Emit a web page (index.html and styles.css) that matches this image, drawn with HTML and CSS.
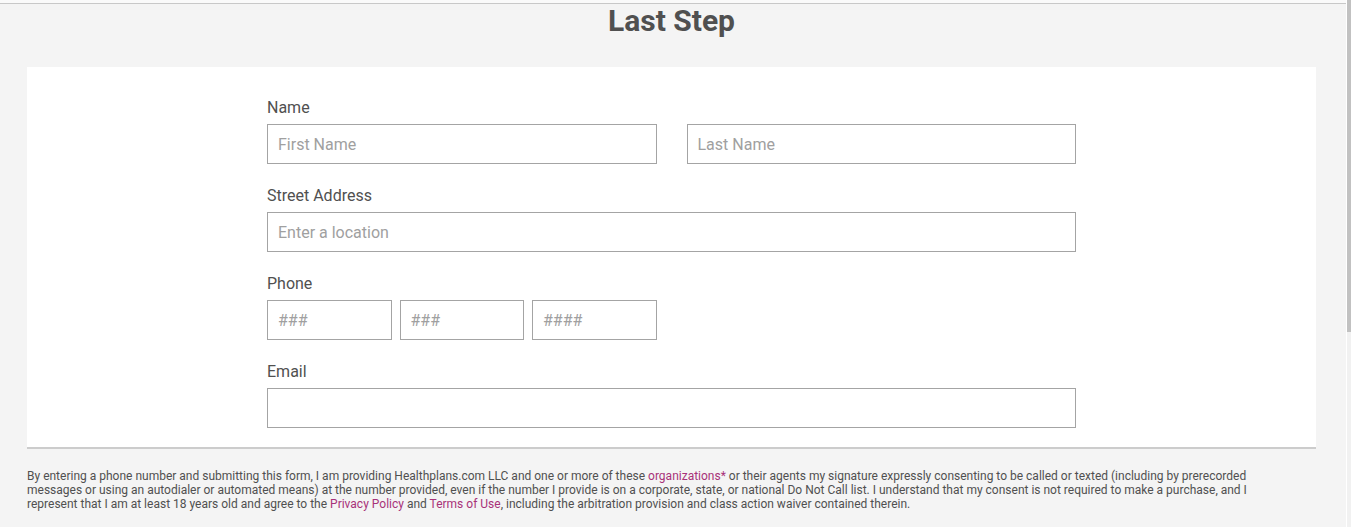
FILE: index.html
```html
<!DOCTYPE html>
<html lang="en">
<head>
<meta charset="utf-8">
<meta name="viewport" content="width=device-width, initial-scale=1">
<title>Last Step</title>
<link rel="stylesheet" href="styles.css">
</head>
<body>
<div class="viewport">
  <main class="page">
    <h1 class="title">Last Step</h1>
    <form class="card">
      <div class="fields">
        <fieldset class="group">
          <legend class="label">Name</legend>
          <div class="row row-name">
            <input class="input" type="text" aria-label="First Name" placeholder="First Name">
            <input class="input" type="text" aria-label="Last Name" placeholder="Last Name">
          </div>
        </fieldset>
        <div class="group">
          <label class="label" for="street">Street Address</label>
          <input class="input" id="street" type="text" placeholder="Enter a location">
        </div>
        <fieldset class="group">
          <legend class="label">Phone</legend>
          <div class="row row-phone">
            <input class="input" type="tel" aria-label="Area code" placeholder="###">
            <input class="input" type="tel" aria-label="Prefix" placeholder="###">
            <input class="input" type="tel" aria-label="Line number" placeholder="####">
          </div>
        </fieldset>
        <div class="group">
          <label class="label" for="email">Email</label>
          <input class="input" id="email" type="email">
        </div>
      </div>
    </form>
    <p class="legal">
      <span class="line">By entering a phone number and submitting this form, I am providing Healthplans.com LLC and one or more of these <a href="#">organizations*</a> or their agents my signature expressly consenting to be called or texted (including by prerecorded</span>
      <span class="line">messages or using an autodialer or automated means) at the number provided, even if the number I provide is on a corporate, state, or national Do Not Call list. I understand that my consent is not required to make a purchase, and I</span>
      <span class="line">represent that I am at least 18 years old and agree to the <a href="#">Privacy Policy</a> and <a href="#">Terms of Use</a>, including the arbitration provision and class action waiver contained therein.</span>
    </p>
  </main>
  <div class="scrollbar"><div class="thumb"></div></div>
</div>
</body>
</html>
```
FILE: styles.css
```css
*, *::before { box-sizing: border-box; }
body {
  margin: 0;
  background: #f4f4f4;
  color: #505050;
  font-family: Roboto, "Liberation Sans", sans-serif;
}
.viewport { display: flex; height: 100vh; overflow: hidden; }
.page { flex: 1; min-width: 0; padding: 0 30px 0 27px; }
.page::before {
  content: "";
  display: block;
  height: 4px;
  margin: 0 -30px 0 -27px;
  border-bottom: 1px solid #c8c8c8;
  background: #fafafa;
}
.title { margin: 0; font-size: 30px; line-height: 34px; font-weight: 700; text-align: center; }
.card { margin-top: 29px; background: #fff; border-bottom: 2px solid #ccc; padding: 29px 240px 19px; }
.fields { display: flex; flex-direction: column; gap: 20px; }
.group { display: block; margin: 0; padding: 0; border: 0; min-width: 0; }
.label { display: block; padding: 0; font-size: 16px; line-height: 24px; font-weight: 400; margin-bottom: 4px; }
.row { display: grid; }
.row-name { grid-template-columns: 1fr 1fr; gap: 30px; }
.row-phone { grid-template-columns: repeat(3, 1fr); gap: 8px; width: calc(50% - 15px); }
.input {
  display: block; width: 100%; height: 40px; padding: 0 10px;
  border: 1px solid #a4a4a4; border-radius: 0; background: #fff;
  color: #505050; font: 16px Roboto, sans-serif;
}
.input::placeholder { color: #a0a0a0; opacity: 1; }
.legal { margin: 20px 0 0; font-size: 12px; line-height: 14px; }
.line { display: block; white-space: nowrap; }
.legal a { color: #a83279; text-decoration: none; }
.scrollbar { width: 5px; border-left: 1px solid #fff; background: #f1f1f1; }
.thumb { height: 63%; background: #c1c1c1; }
```
